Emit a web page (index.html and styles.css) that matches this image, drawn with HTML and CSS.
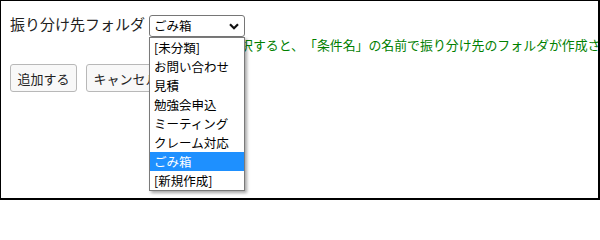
FILE: index.html
```html
<!DOCTYPE html>
<html lang="ja">
<head>
<meta charset="utf-8">
<link rel="stylesheet" href="styles.css">
</head>
<body>
<div class="frame">
  <div class="form">
    <div class="label">振り分け先フォルダ</div>
    <div class="field">
      <div class="select">
        <span class="value">ごみ箱</span>
        <svg class="chev" width="10" height="7" viewBox="0 0 10 7"><path d="M1 1.2 L5 5.2 L9 1.2" fill="none" stroke="#111" stroke-width="2.2"/></svg>
      </div>
      <div class="note">[新規作成]を選択すると、「条件名」の名前で振り分け先のフォルダが作成されます。</div>
      <ul class="list">
        <li>[未分類]</li>
        <li>お問い合わせ</li>
        <li>見積</li>
        <li>勉強会申込</li>
        <li>ミーティング</li>
        <li>クレーム対応</li>
        <li class="sel">ごみ箱</li>
        <li>[新規作成]</li>
      </ul>
    </div>
  </div>
  <div class="buttons">
    <button class="btn">追加する</button>
    <button class="btn">キャンセル</button>
  </div>
</div>
</body>
</html>
```
FILE: styles.css
```css
html, body {
  margin: 0;
  padding: 0;
  background: #fff;
  width: 600px;
  height: 200px;
  overflow: hidden;
}
body {
  font-family: "Noto Sans CJK JP", "Noto Sans", sans-serif;
  color: #222;
  text-spacing-trim: space-all;
}
.frame {
  width: 600px;
  height: 200px;
  box-sizing: border-box;
  border-left: 1px solid #000;
  border-top: 1px solid #000;
  border-right: 2px solid #000;
  border-bottom: 2px solid #000;
  padding: 14px 0 0 9px;
  overflow: hidden;
  white-space: nowrap;
}
.form {
  display: flex;
  align-items: flex-start;
}
.label {
  font-size: 15px;
  line-height: 15px;
  width: 139px;
  padding-top: 1px;
  flex: none;
}
.field {
  position: relative;
}
.select {
  width: 96px;
  height: 22px;
  box-sizing: border-box;
  border: 1px solid #767676;
  border-radius: 3px;
  background: #fff;
  display: flex;
  align-items: center;
  justify-content: space-between;
  padding: 0 4px 0 4px;
  font-size: 12.5px;
  color: #000;
}
.value {
  line-height: 20px;
}
.chev {
  margin-right: 1px;
  margin-top: 1px;
}
.note {
  font-size: 12.9px;
  line-height: 16px;
  color: #008000;
  padding-left: 5px;
  text-spacing-trim: space-all;
}
.buttons {
  display: flex;
  gap: 9px;
  margin-top: 11px;
}
.btn {
  height: 28px;
  padding: 0 6.5px;
  border: 1px solid #b8b8b8;
  border-radius: 3px;
  background: #f8f8f8;
  font-family: inherit;
  font-size: 13px;
  color: #222;
}
.list {
  position: absolute;
  left: 0;
  top: 22px;
  width: 96px;
  box-sizing: border-box;
  margin: 0;
  padding: 0;
  list-style: none;
  background: #fff;
  border: 1px solid #7a7a7a;
  box-shadow: 2px 2px 3px rgba(0, 0, 0, 0.35);
  font-size: 12.5px;
  color: #000;
}
.list li {
  height: 19px;
  line-height: 19px;
  padding-left: 4px;
}
.list li.sel {
  background: #1e90ff;
  color: #fff;
}
```
